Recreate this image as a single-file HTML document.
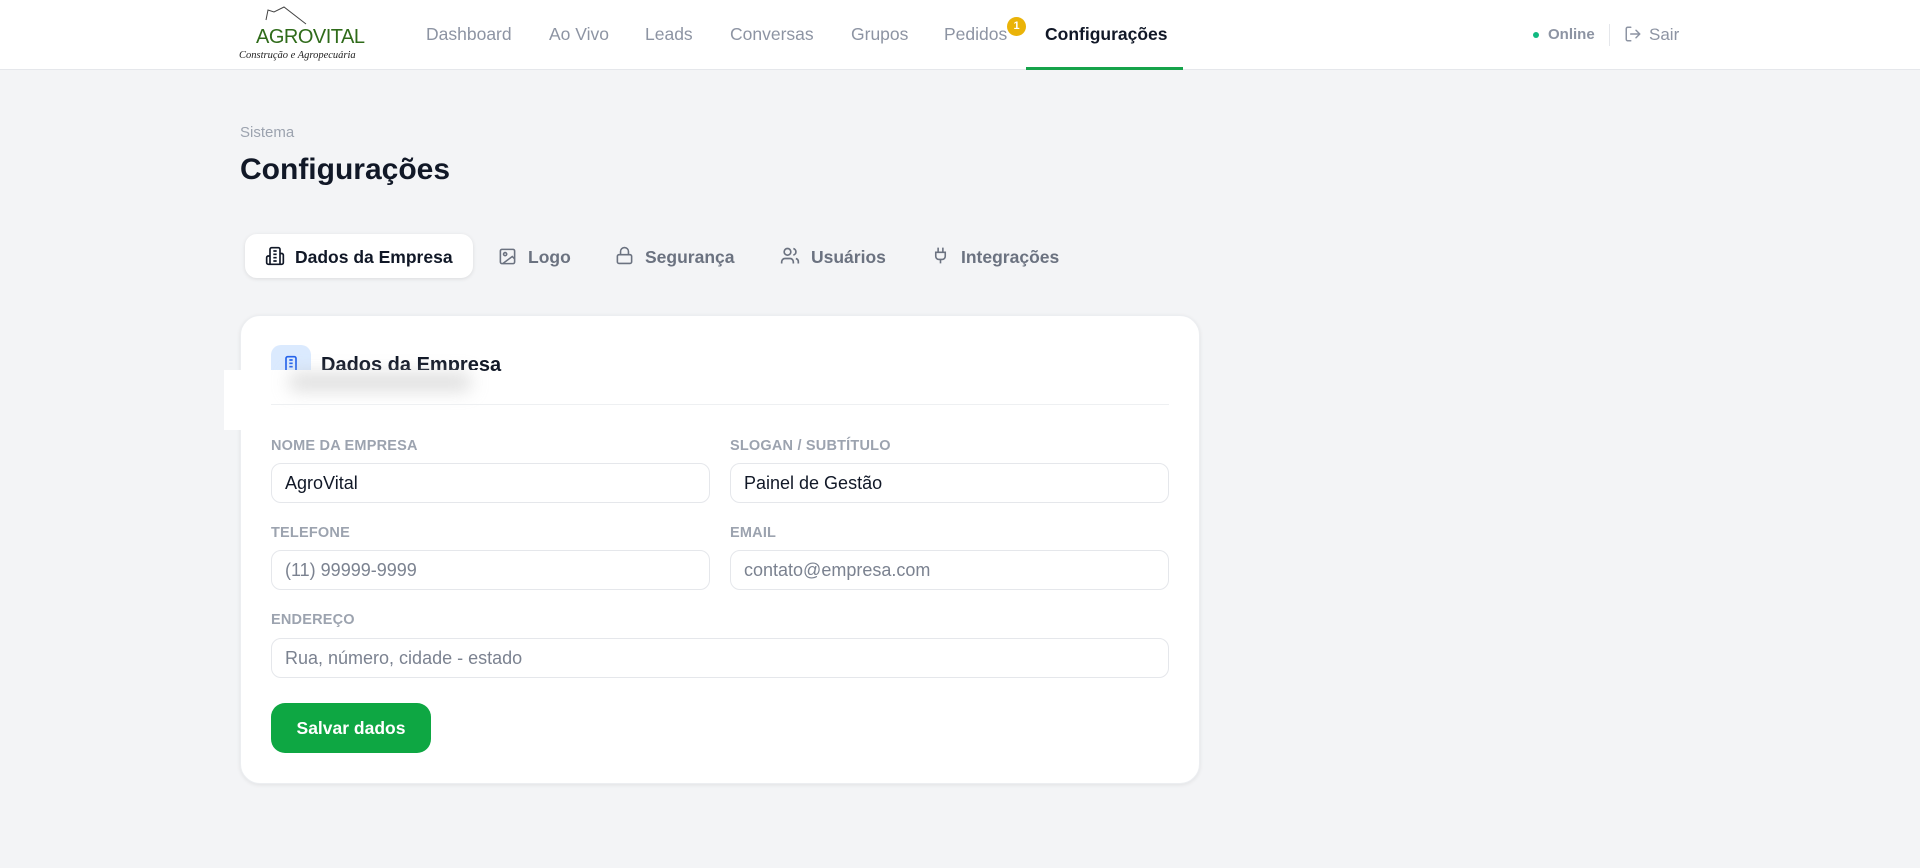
<!DOCTYPE html>
<html><head><meta charset="utf-8"><style>
*{box-sizing:border-box;margin:0;padding:0}
body{width:1920px;height:868px;background:#f3f4f6;font-family:"Liberation Sans",sans-serif;position:relative;overflow:hidden;color:#111827}
.hdr{position:absolute;left:0;top:0;width:1920px;height:70px;background:#fff;border-bottom:1px solid #e5e7eb}
.a{position:absolute;white-space:nowrap}
.nav{top:24px;font-size:17.5px;color:#8d94a3}
.lbl{font-size:14.5px;font-weight:bold;color:#9ca3af;letter-spacing:.2px}
.inp{position:absolute;height:40px;border:1px solid #e5e7eb;border-radius:10px;background:#fff;font-size:18px;padding:0 0 0 13px;line-height:38px;color:#111827}
.ph{color:#7b8290}
.tab{top:247px;font-size:17.5px;font-weight:bold;color:#6b7280}
svg{position:absolute}
</style></head><body>
<div class="hdr"></div>
<!-- logo -->
<svg style="left:262px;top:6px" width="70" height="22" viewBox="0 0 70 22"><path d="M4 14 L6 4 L12 6 L22 1 L44 18" fill="none" stroke="#444" stroke-width="1"/></svg>
<div class="a" style="left:256px;top:26px;font-size:20px;color:#2f6b1a;letter-spacing:-0.5px">AGROVITAL</div>
<div class="a" style="left:239px;top:50px;font-size:10.5px;font-style:italic;font-family:'Liberation Serif',serif;color:#222">Construção e Agropecuária</div>
<div class="a nav" style="left:426px">Dashboard</div>
<div class="a nav" style="left:549px">Ao Vivo</div>
<div class="a nav" style="left:645px">Leads</div>
<div class="a nav" style="left:730px">Conversas</div>
<div class="a nav" style="left:851px">Grupos</div>
<div class="a nav" style="left:944px">Pedidos</div>
<div class="a" style="left:1007px;top:17px;width:19px;height:19px;border-radius:50%;background:#eab308;color:#fff;font-size:11px;font-weight:bold;text-align:center;line-height:19px">1</div>
<div class="a nav" style="left:1045px;color:#111827;font-weight:bold">Configurações</div>
<div class="a" style="left:1026px;top:67px;width:157px;height:3px;background:#16a34a"></div>
<div class="a" style="left:1533px;top:32px;width:6px;height:6px;border-radius:50%;background:#10b981"></div>
<div class="a" style="left:1548px;top:26px;font-size:15px;font-weight:bold;color:#8d94a3">Online</div>
<div class="a" style="left:1609px;top:24px;width:1px;height:22px;background:#e5e7eb"></div>
<svg style="left:1624px;top:25px" width="18" height="18" viewBox="0 0 24 24" fill="none" stroke="#8d94a3" stroke-width="2" stroke-linecap="round" stroke-linejoin="round"><path d="M9 21H5a2 2 0 0 1-2-2V5a2 2 0 0 1 2-2h4M16 17l5-5-5-5M21 12H9"/></svg>
<div class="a" style="left:1649px;top:25px;font-size:17px;color:#8d94a3">Sair</div>

<div class="a" style="left:240px;top:124px;font-size:15px;color:#9ca3af">Sistema</div>
<div class="a" style="left:240px;top:153px;font-size:30px;font-weight:bold;color:#111827">Configurações</div>

<div class="a" style="left:245px;top:234px;width:228px;height:44px;background:#fff;border-radius:12px;box-shadow:0 1px 4px rgba(0,0,0,.1)"></div>
<svg style="left:265px;top:246px" width="20" height="20" viewBox="0 0 24 24" fill="none" stroke="#111827" stroke-width="2"><path d="M6 22V4a2 2 0 0 1 2-2h8a2 2 0 0 1 2 2v18ZM6 12H4a2 2 0 0 0-2 2v6a2 2 0 0 0 2 2h2M18 9h2a2 2 0 0 1 2 2v9a2 2 0 0 1-2 2h-2M10 6h4M10 10h4M10 14h4M10 18h4"/></svg>
<div class="a tab" style="left:295px;color:#111827">Dados da Empresa</div>
<svg style="left:498px;top:247px" width="19" height="19" viewBox="0 0 24 24" fill="none" stroke="#6b7280" stroke-width="2"><rect x="3" y="3" width="18" height="18" rx="2"/><circle cx="9" cy="9" r="2"/><path d="m21 15-3-3L6 21"/></svg>
<div class="a tab" style="left:528px">Logo</div>
<svg style="left:615px;top:246px" width="19" height="19" viewBox="0 0 24 24" fill="none" stroke="#6b7280" stroke-width="2"><rect x="3" y="11" width="18" height="11" rx="2"/><path d="M7 11V7a5 5 0 0 1 10 0v4"/></svg>
<div class="a tab" style="left:645px">Segurança</div>
<svg style="left:780px;top:246px" width="20" height="20" viewBox="0 0 24 24" fill="none" stroke="#6b7280" stroke-width="2"><path d="M16 21v-2a4 4 0 0 0-4-4H6a4 4 0 0 0-4 4v2"/><circle cx="9" cy="7" r="4"/><path d="M22 21v-2a4 4 0 0 0-3-3.9M16 3.1a4 4 0 0 1 0 7.8"/></svg>
<div class="a tab" style="left:811px">Usuários</div>
<svg style="left:931px;top:246px" width="19" height="19" viewBox="0 0 24 24" fill="none" stroke="#6b7280" stroke-width="2"><path d="M12 22v-5M9 8V2M15 8V2M18 8v5a4 4 0 0 1-4 4h-4a4 4 0 0 1-4-4V8Z"/></svg>
<div class="a tab" style="left:961px">Integrações</div>

<div class="a" style="left:240px;top:315px;width:960px;height:469px;background:#fff;border-radius:20px;box-shadow:0 1px 4px rgba(0,0,0,.08);border:1px solid #eceef1"></div>
<div class="a" style="left:271px;top:345px;width:40px;height:40px;border-radius:10px;background:#dbeafe"></div>
<svg style="left:281px;top:355px" width="20" height="20" viewBox="0 0 24 24" fill="none" stroke="#2563eb" stroke-width="2"><path d="M6 22V4a2 2 0 0 1 2-2h8a2 2 0 0 1 2 2v18ZM10 6h4M10 10h4M10 14h4"/></svg>
<div class="a" style="left:321px;top:354px;font-size:20px;font-weight:bold">Dados da Empresa</div>
<div class="a" style="left:224px;top:370px;width:256px;height:60px;background:#fff"></div>
<div class="a" style="left:290px;top:374px;width:180px;height:16px;background:#bbb;filter:blur(9px);opacity:.55"></div>
<div class="a" style="left:271px;top:404px;width:898px;height:1px;background:#eef0f2"></div>

<div class="a lbl" style="left:271px;top:438px">NOME DA EMPRESA</div>
<div class="a lbl" style="left:730px;top:438px">SLOGAN / SUBTÍTULO</div>
<div class="inp" style="left:271px;top:463px;width:439px">AgroVital</div>
<div class="inp" style="left:730px;top:463px;width:439px">Painel de Gestão</div>
<div class="a lbl" style="left:271px;top:525px">TELEFONE</div>
<div class="a lbl" style="left:730px;top:525px">EMAIL</div>
<div class="inp ph" style="left:271px;top:550px;width:439px">(11) 99999-9999</div>
<div class="inp ph" style="left:730px;top:550px;width:439px">contato@empresa.com</div>
<div class="a lbl" style="left:271px;top:612px">ENDEREÇO</div>
<div class="inp ph" style="left:271px;top:638px;width:898px">Rua, número, cidade - estado</div>
<div class="a" style="left:271px;top:703px;width:160px;height:50px;border-radius:14px;background:#0ea743;color:#fff;font-size:17.5px;font-weight:bold;text-align:center;line-height:50px">Salvar dados</div>
</body></html>
